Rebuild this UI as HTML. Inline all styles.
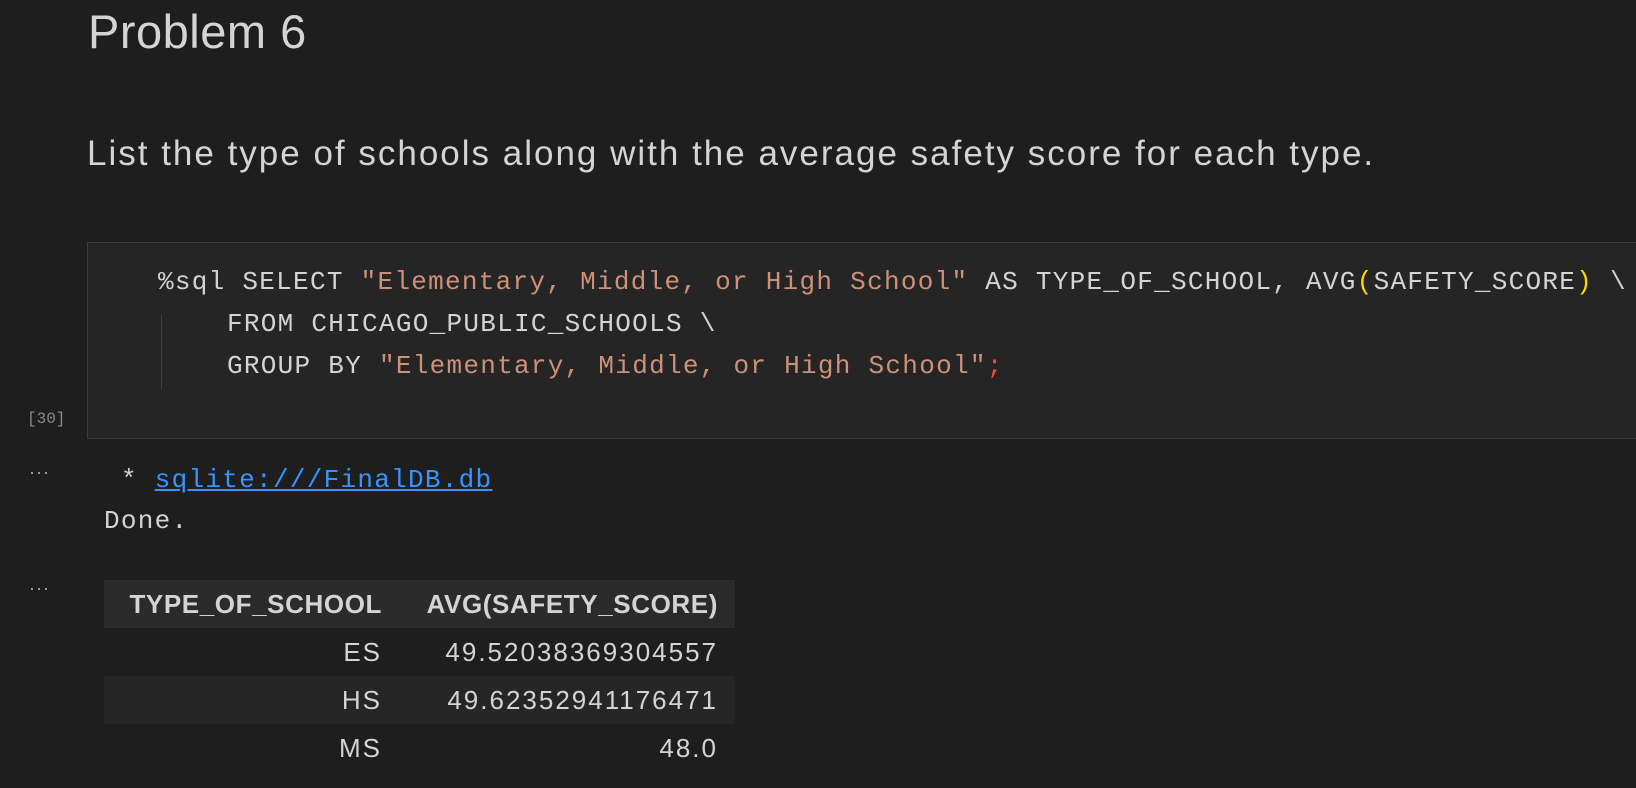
<!DOCTYPE html>
<html><head><meta charset="utf-8">
<style>
html,body{margin:0;padding:0;background:#1e1e1e;width:1636px;height:788px;overflow:hidden;position:relative;font-family:"Liberation Sans",sans-serif;color:#cccccc}
.abs{position:absolute;white-space:pre}
.title{left:88px;top:4px;font-size:47px;letter-spacing:0.5px;color:#d4d4d4}
.para{left:87px;top:134px;font-size:35px;letter-spacing:2px;color:#d4d4d4}
.cell{position:absolute;left:87px;top:242px;width:1560px;height:197px;background:#252526;border:1px solid #3c3c3c;box-sizing:border-box}
.mono{font-family:"Liberation Mono",monospace;font-size:26px;letter-spacing:1.28px;color:#d4d4d4}
.s{color:#ce9178}.y{color:#ffd700}.r{color:#f44747}
.guide{position:absolute;left:161px;top:315px;width:1px;height:74px;background:#404040}
.count{left:27px;top:410px;font-family:"Liberation Mono",monospace;font-size:16px;color:#8a8a8a}
.dots{font-size:18px;color:#aaa;letter-spacing:1px}
a{color:#3794ff;text-decoration:underline}
table{position:absolute;left:104px;top:580px;border-collapse:collapse;font-size:26px;color:#d4d4d4;letter-spacing:2px}
td,th{height:48px;padding:0;text-align:right;box-sizing:border-box}
th{font-weight:bold;background:#2b2b2b;letter-spacing:0.6px}
tr.alt td{background:#262626}
.c1{width:290px;padding-right:12px}
.c2{width:341px;padding-right:17px}
</style></head><body>
<div class="abs title">Problem 6</div>
<div class="abs para">List the type of schools along with the average safety score for each type.</div>
<div class="cell"></div>
<div class="guide"></div>
<div class="abs mono" style="left:158px;top:267px">%sql SELECT <span class="s">"Elementary, Middle, or High School"</span> AS TYPE_OF_SCHOOL, AVG<span class="y">(</span>SAFETY_SCORE<span class="y">)</span> \</div>
<div class="abs mono" style="left:227px;top:309px">FROM CHICAGO_PUBLIC_SCHOOLS \</div>
<div class="abs mono" style="left:227px;top:351px">GROUP BY <span class="s">"Elementary, Middle, or High School"</span><span class="r">;</span></div>
<div class="abs count">[30]</div>
<div class="abs dots" style="left:29px;top:462px">···</div>
<div class="abs mono" style="left:121px;top:465px">* <a>sqlite:///FinalDB.db</a></div>
<div class="abs mono" style="left:104px;top:506px">Done.</div>
<div class="abs dots" style="left:29px;top:578px">···</div>
<table>
<tr><th class="c1">TYPE_OF_SCHOOL</th><th class="c2">AVG(SAFETY_SCORE)</th></tr>
<tr><td class="c1">ES</td><td class="c2">49.52038369304557</td></tr>
<tr class="alt"><td class="c1">HS</td><td class="c2">49.62352941176471</td></tr>
<tr><td class="c1">MS</td><td class="c2">48.0</td></tr>
</table>
</body></html>
